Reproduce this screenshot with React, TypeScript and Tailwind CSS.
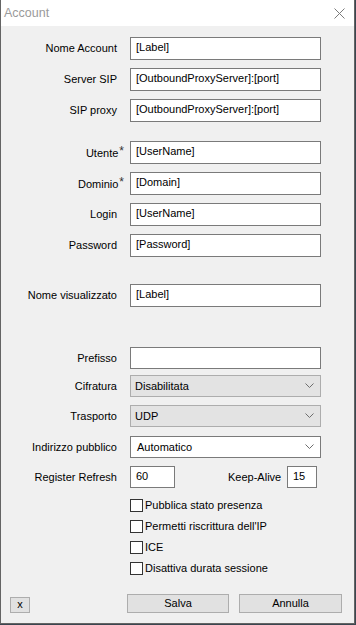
import { ReactNode } from 'react'

const FONT = "font-['Liberation_Sans',Arial,sans-serif]"

function Chevron() {
  return (
    <svg width="9" height="6" viewBox="0 0 9 6" className="shrink-0">
      <polyline points="0.5,0.5 4.5,4.5 8.5,0.5" fill="none" stroke="#6d6d6d" strokeWidth="1" />
    </svg>
  )
}

function Label({ children, star }: { children: ReactNode; star?: boolean }) {
  return (
    <div className="w-[116px] shrink-0 text-right text-black whitespace-nowrap">
      {children}
      {star && <span className="relative -top-[2px] ml-[1px] mr-[-7px] text-[12px] text-[#333]">*</span>}
    </div>
  )
}

function TextRow({ label, value, star, top }: { label: string; value: string; star?: boolean; top: string }) {
  return (
    <div className={`flex items-center h-[23px] ${top}`}>
      <Label star={star}>{label}</Label>
      <div className="ml-[13px] w-[191px] h-full border border-[#7a7a7a] bg-white flex items-center pl-[5px] pb-[2px] text-black">
        {value}
      </div>
    </div>
  )
}

function SelectRow({ label, value, disabled, top }: { label: string; value: string; disabled?: boolean; top: string }) {
  return (
    <div className={`flex items-center h-[22px] ${top}`}>
      <Label>{label}</Label>
      <div
        className={`ml-[13px] w-[191px] h-full border flex items-center justify-between pl-[4px] pr-[6px] text-black ${
          disabled ? 'bg-[#e3e3e3] border-[#adadad]' : 'bg-white border-[#7a7a7a] pl-[6px]'
        }`}
      >
        <span>{value}</span>
        <Chevron />
      </div>
    </div>
  )
}

function Check({ label, top }: { label: string; top: string }) {
  return (
    <div className={`flex items-center h-[13px] ${top}`}>
      <div className="ml-[129px] w-[13px] h-[13px] border border-[#333] bg-white shrink-0" />
      <span className="ml-[2px] text-[#000] leading-none">{label}</span>
    </div>
  )
}

export default function App() {
  return (
    <div className={`w-[356px] h-[625px] bg-[#3b4650] ${FONT} text-[11px]`}>
      <div className="w-[355px] h-[624px] bg-[#f0f0f0] border-l border-r border-b border-[#646464] flex flex-col">
        {/* Title bar */}
        <div className="h-[26px] bg-white flex items-center justify-between shrink-0">
          <span className="ml-[3px] text-[12.5px] text-[#9a9a9a]">Account</span>
          <svg width="11" height="11" viewBox="0 0 11 11" className="mr-[9px]">
            <line x1="0.5" y1="0.5" x2="10.5" y2="10.5" stroke="#7b7b7b" strokeWidth="1" />
            <line x1="10.5" y1="0.5" x2="0.5" y2="10.5" stroke="#7b7b7b" strokeWidth="1" />
          </svg>
        </div>

        <TextRow top="mt-[11px]" label="Nome Account" value="[Label]" />
        <TextRow top="mt-[8px]" label="Server SIP" value="[OutboundProxyServer]:[port]" />
        <TextRow top="mt-[8px]" label="SIP proxy" value="[OutboundProxyServer]:[port]" />

        <TextRow top="mt-[19px]" label="Utente" star value="[UserName]" />
        <TextRow top="mt-[8px]" label="Dominio" star value="[Domain]" />
        <TextRow top="mt-[8px]" label="Login" value="[UserName]" />
        <TextRow top="mt-[8px]" label="Password" value="[Password]" />

        <TextRow top="mt-[27px]" label="Nome visualizzato" value="[Label]" />

        <div className="flex items-center h-[22px] mt-[40px]">
          <Label>Prefisso</Label>
          <div className="ml-[13px] w-[191px] h-full border border-[#7a7a7a] bg-white" />
        </div>
        <SelectRow top="mt-[6px]" label="Cifratura" value="Disabilitata" disabled />
        <SelectRow top="mt-[8px]" label="Trasporto" value="UDP" disabled />
        <SelectRow top="mt-[9px]" label="Indirizzo pubblico" value="Automatico" />

        <div className="flex items-center h-[22px] mt-[8px]">
          <Label>Register Refresh</Label>
          <div className="ml-[13px] w-[45px] h-full border border-[#7a7a7a] bg-white flex items-center pl-[5px] pb-[2px] text-black">
            60
          </div>
          <span className="ml-[53px] w-[51px] text-black whitespace-nowrap">Keep-Alive</span>
          <div className="ml-[8px] w-[30px] h-full border border-[#7a7a7a] bg-white flex items-center pl-[5px] pb-[2px] text-black">
            15
          </div>
        </div>

        <Check top="mt-[11px]" label="Pubblica stato presenza" />
        <Check top="mt-[8px]" label="Permetti riscrittura dell'IP" />
        <Check top="mt-[8px]" label="ICE" />
        <Check top="mt-[8px]" label="Disattiva durata sessione" />

        <div className="flex items-end mt-[19px]">
          <button className="ml-[9px] w-[20px] h-[16px] bg-[#e1e1e1] border border-[#adadad] text-black flex items-center justify-center leading-none pb-[1px]">
            x
          </button>
          <button className="ml-[97px] w-[102px] h-[19px] bg-[#e1e1e1] border border-[#adadad] text-black leading-none">
            Salva
          </button>
          <button className="ml-[10px] w-[103px] h-[19px] bg-[#e1e1e1] border border-[#adadad] text-black leading-none">
            Annulla
          </button>
        </div>
      </div>
    </div>
  )
}
